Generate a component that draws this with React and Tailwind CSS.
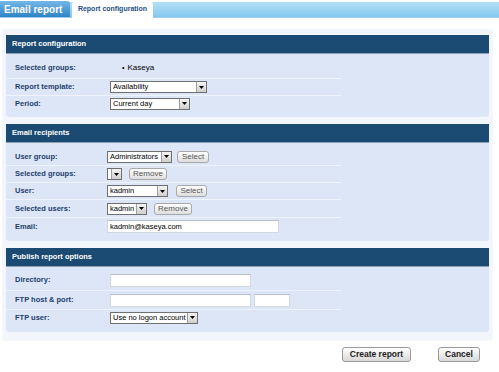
import React from 'react';

const font = { fontFamily: '"Liberation Sans", Arial, sans-serif' };

const Arrow = () => (
  <span className="flex h-full w-[10px] items-center justify-center border-l border-[#a0a0a0] bg-gradient-to-b from-[#f4f4f4] to-[#cfcfcf]">
    <svg width="5" height="3" viewBox="0 0 5 3">
      <path d="M0 0h5L2.5 3z" fill="#000" />
    </svg>
  </span>
);

const Select = ({ value, width }) => (
  <div
    className="flex h-[12px] items-stretch border border-[#6f6f6f] bg-white text-[7.5px] leading-[10px] text-black"
    style={{ width }}
  >
    <span className="flex-1 overflow-hidden whitespace-nowrap pl-[2px]">{value}</span>
    <Arrow />
  </div>
);

const SmallButton = ({ children, width }) => (
  <div
    className="flex h-[12px] items-center justify-center rounded-[3px] border border-[#a9a9a9] bg-gradient-to-b from-white to-[#dedede] text-[8px] text-[#555]"
    style={{ width }}
  >
    {children}
  </div>
);

const TextInput = ({ width }) => (
  <div className="h-[13px] border border-[#d2d8e0] border-t-[#b8c0ca] bg-white" style={{ width }} />
);

const Row = ({ label, height, last, children }) => (
  <div
    className={`flex w-[335px] items-center ${last ? '' : 'border-b border-[#eef3fc]'}`}
    style={{ height }}
  >
    <div className="w-[9px]" />
    <div className="w-[92px] text-[7.5px] font-bold text-[#1d3d6a]">{label}</div>
    <div className="flex items-center">{children}</div>
  </div>
);

const Section = ({ title, pt, pb, children }) => (
  <div className="flex flex-col">
    <div className="flex h-[19px] items-center border-b border-[#8ca0b3] bg-[#1b4a72] pl-[6px] text-[7.5px] font-bold text-white">
      {title}
    </div>
    <div className="flex flex-col rounded-b-[3px] bg-[#dce6f7]" style={{ paddingTop: pt, paddingBottom: pb }}>
      {children}
    </div>
  </div>
);

export default function App() {
  return (
    <div className="h-[372px] w-[499px] overflow-hidden bg-white" style={font}>
      <div className="mt-[2px] flex h-[16px] items-end border-b border-[#9fcfec] bg-gradient-to-b from-[#b3dff8] to-[#86c8ef]">
        <div className="flex h-[16px] w-[70px] items-center rounded-tr-[3px] bg-gradient-to-b from-[#74b8e8] to-[#2e84c6] pl-[4px] text-[10px] font-bold text-white">
          Email report
        </div>
        <div className="ml-[2px] -mb-[1px] flex h-[17px] w-[81px] items-center justify-center rounded-t-[4px] bg-white text-[7px] font-bold text-[#1c4f86]">
          Report configuration
        </div>
      </div>

      <div className="mx-[2px] mt-[11px] flex w-[491px] flex-col gap-[7px] rounded-b-[4px] bg-[#f4f6fe] px-[4px] pt-[6px] pb-[9px]">
        <Section title="Report configuration" pt={4} pb={6}>
          <Row label="Selected groups:" height={21}>
            <div className="flex items-center pl-[15px] text-[8px] text-black">
              <span className="mr-[3px] text-[7px]">•</span>Kaseya
            </div>
          </Row>
          <Row label="Report template:" height={17}>
            <div className="pl-[3px]">
              <Select value="Availability" width={97} />
            </div>
          </Row>
          <Row label="Period:" height={15} last>
            <div className="pl-[3px]">
              <Select value="Current day" width={80} />
            </div>
          </Row>
        </Section>

        <Section title="Email recipients" pt={5} pb={6}>
          <Row label="User group:" height={18}>
            <div className="flex items-center gap-[5px]">
              <Select value="Administrators" width={65} />
              <SmallButton width={32}>Select</SmallButton>
            </div>
          </Row>
          <Row label="Selected groups:" height={17}>
            <div className="flex items-center gap-[7px]">
              <Select value="" width={15} />
              <SmallButton width={38}>Remove</SmallButton>
            </div>
          </Row>
          <Row label="User:" height={17}>
            <div className="flex items-center gap-[8px]">
              <Select value="kadmin" width={61} />
              <SmallButton width={31}>Select</SmallButton>
            </div>
          </Row>
          <Row label="Selected users:" height={18}>
            <div className="flex items-center gap-[7px]">
              <Select value="kadmin" width={40} />
              <SmallButton width={38}>Remove</SmallButton>
            </div>
          </Row>
          <Row label="Email:" height={17} last>
            <div className="flex h-[13px] w-[172px] items-center border border-[#d2d8e0] border-t-[#b8c0ca] bg-white pl-[2px] text-[7.5px] text-black">
              kadmin@kaseya.com
            </div>
          </Row>
        </Section>

        <Section title="Publish report options" pt={3} pb={7}>
          <Row label="Directory:" height={21}>
            <div className="pl-[3px]">
              <TextInput width={141} />
            </div>
          </Row>
          <Row label="FTP host & port:" height={19}>
            <div className="flex items-center gap-[3px] pl-[3px]">
              <TextInput width={141} />
              <TextInput width={36} />
            </div>
          </Row>
          <Row label="FTP user:" height={15} last>
            <div className="pl-[3px]">
              <Select value="Use no logon account" width={88} />
            </div>
          </Row>
        </Section>
      </div>

      <div className="mt-[6px] flex justify-end gap-[27px] pr-[19px]">
        <div className="flex h-[15px] w-[69px] items-center justify-center rounded-[3px] border border-[#9a9a9a] bg-gradient-to-b from-white to-[#d8d8d8] text-[8.5px] font-bold text-[#222]">
          Create report
        </div>
        <div className="flex h-[15px] w-[42px] items-center justify-center rounded-[3px] border border-[#9a9a9a] bg-gradient-to-b from-white to-[#d8d8d8] text-[8.5px] font-bold text-[#222]">
          Cancel
        </div>
      </div>
    </div>
  );
}
